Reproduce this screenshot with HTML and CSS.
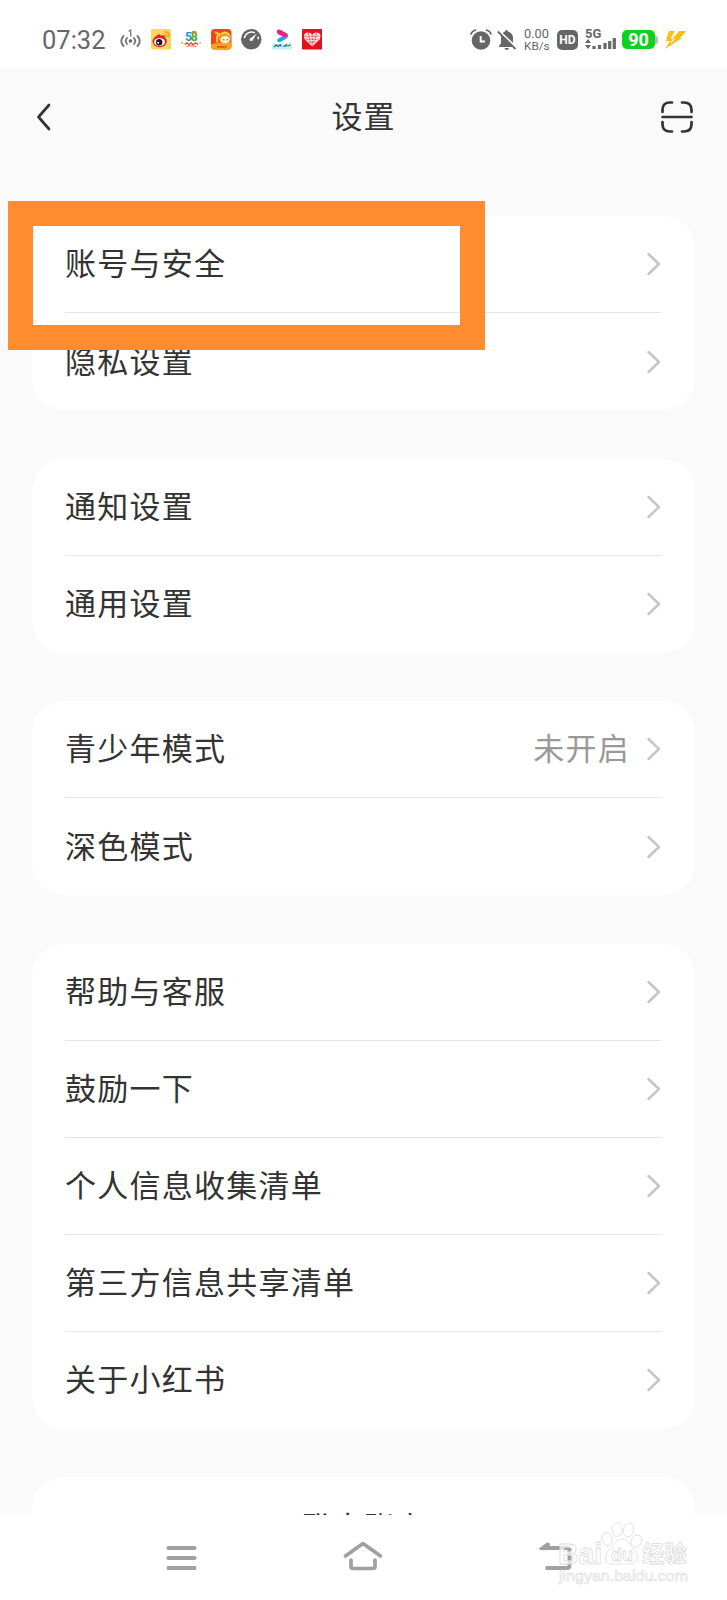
FILE: index.html
```
<!DOCTYPE html>
<html lang="zh-CN">
<head>
  <meta charset="UTF-8">
  <meta name="viewport" content="width=device-width, initial-scale=1.0">
  <title>设置</title>
  <link rel="stylesheet" href="styles.css">
</head>
<body>
  <svg class="symbols">
    <symbol id="chevron" viewBox="0 0 16 24">
      <path d="M2.500 2 L13 12 L2.500 22" fill="none" stroke="#c6c6c6" stroke-width="2.500" stroke-linecap="round" stroke-linejoin="round"/>
    </symbol>
  </svg>

  <div class="screen">
    <div class="status-bar">
      <span class="time">07:32</span>
      <svg class="hotspot" viewBox="0 0 24 22">
        <g fill="none" stroke="#777" stroke-width="1.9" stroke-linecap="round">
          <path d="M4.500 7 Q0 12 4.500 17M18.500 7 Q23 12 18.500 17M8 9 Q5.500 12 8 15M15 9 Q17.500 12 15 15"/>
          <path d="M10 2 L11.700 1 V7" stroke-width="1.300"/>
        </g>
        <circle cx="11.500" cy="12" r="1.800" fill="#666"/>
      </svg>
      <div class="app-icons">
        <!-- weibo -->
        <svg viewBox="0 0 20 20">
          <rect width="20" height="20" rx="2" fill="#fbd75a"/>
          <ellipse cx="8.500" cy="12" rx="7" ry="5.700" fill="#e0202a"/>
          <path d="M4 8 Q8 3 9.500 6.500 Q14 5 13.500 9" fill="#e0202a"/>
          <ellipse cx="8.300" cy="12.700" rx="5.300" ry="3.900" fill="#fff"/>
          <circle cx="8" cy="12.900" r="3.100" fill="#1d1416"/>
          <circle cx="7" cy="13.500" r="1" fill="#fff"/>
          <path d="M12.500 3 Q18 2 17.800 8M13 5.500 Q15.500 5.500 15.300 8" fill="none" stroke="#f4951f" stroke-width="1.300"/>
        </svg>
        <!-- 58 -->
        <svg viewBox="0 0 20 20">
          <text x="4" y="11.500" class="num" fill="#1d9bd8">5</text>
          <text x="9.500" y="11.500" class="num" fill="#51a832">8</text>
          <path d="M11 4.500 Q10.500 2.500 12.700 2.500 Q14.800 2.500 14.500 4.500" fill="none" stroke="#f57c1f" stroke-width="1.500"/>
          <path d="M3.500 15 L6 13.500 L7.500 15.500 L10 13.500 L12 15.500 L14 13.500 L16.500 15" fill="none" stroke="#e2472f" stroke-width="1.300"/>
          <path d="M5 17 Q10 15.500 15 17" fill="none" stroke="#ef6b45" stroke-width="1"/>
          <path d="M0 13 L2 14M20 13 L18 14" stroke="#f3a530" stroke-width="1.300"/>
        </svg>
        <!-- cartoon game -->
        <svg viewBox="0 0 20 20">
          <rect width="20" height="20" rx="3.500" fill="#f4431f"/>
          <path d="M0 15 Q10 12 20 13 V17 Q20 20 16 20 H4 Q0 20 0 17Z" fill="#f9a01f"/>
          <circle cx="13.500" cy="8.500" r="6" fill="#fc9a20"/>
          <path d="M4 3 L8 5 L6 7 V13" fill="none" stroke="#ffd23b" stroke-width="2"/>
          <path d="M10 5 Q14 1.500 18 6" fill="none" stroke="#ffe14a" stroke-width="1.500"/>
          <ellipse cx="13.800" cy="10.500" rx="4.600" ry="3.600" fill="#fff3d3"/>
          <circle cx="12.500" cy="10.500" r=".7" fill="#b5421c"/>
          <circle cx="16" cy="10.500" r=".7" fill="#b5421c"/>
          <path d="M6 17.500 H15" stroke="#b8551a" stroke-width="1.600" stroke-dasharray="2 .6"/>
        </svg>
        <!-- speed gauge -->
        <svg viewBox="0 0 20 20">
          <circle cx="10" cy="10" r="10" fill="#646464"/>
          <path d="M3.300 9 A7 7 0 0 1 13.500 3.800M16.500 7.500 Q17 8.500 16.900 10" fill="none" stroke="#fff" stroke-width="1.400"/>
          <path d="M15.500 4.500 L11 11.500 A1.700 1.700 0 0 1 8.500 9.500Z" fill="#fff"/>
        </svg>
        <!-- video -->
        <svg viewBox="0 0 20 20">
          <path d="M15.700 6 Q16 8 14.500 9 L8.500 12.500 Q5.500 13.500 5 11.500 Q4.800 10 6.500 9 L11.500 6.500Z" fill="#16a9e8"/>
          <path d="M6 .5 Q4.500 1 4.800 3.200 Q5 4.800 7 5.500 L12 8 L15.700 6.500 Q15.500 4.500 13 3.500 L8 .8 Q7 .2 6 .5Z" fill="#f51b8c"/>
          <rect x="0" y="14" width="20" height="6" fill="#c5f0f3"/>
          <path d="M2 17.500 L4 15.500 L6 17 L8 15.300 L9 17M11 17 H12 L14 15.500 L15 17M16 16.500 L18 15.500" fill="none" stroke="#276f82" stroke-width="1.300"/>
        </svg>
        <!-- heart -->
        <svg viewBox="0 0 20 20">
          <rect width="20" height="20" rx="1" fill="#e0131f"/>
          <path d="M10 17 L2.500 10 Q0.500 4 5.500 3.500 Q9 3.500 10 5.500 Q11 3.500 14.500 3.500 Q19.500 4 17.500 10Z" fill="#fbdede"/>
          <path d="M3 7 H17M4 10 L16 10M6 4 L8 13M14 4 L12 13M7 13 H13M10 6 V16" stroke="#e44" stroke-width=".9" stroke-dasharray="1.800 1"/>
        </svg>
      </div>

      <div class="system-icons">
        <svg class="alarm" viewBox="0 0 22 22">
          <circle cx="11" cy="11.500" r="9.300" fill="#666"/>
          <path d="M1 5 Q2 2 5.500 1M21 5 Q20 2 16.500 1" fill="none" stroke="#666" stroke-width="1.700" stroke-linecap="round"/>
          <path d="M10.700 7 V12.500 H15" fill="none" stroke="#fff" stroke-width="2"/>
        </svg>
        <svg class="bell" viewBox="0 0 20 22">
          <path d="M9.500 1 Q11 1 11 2.500 Q16 4 16 9 V14 L18.500 17 V18 H2 V17 L4 14 V9 Q4 4 8 2.500 Q8 1 9.500 1ZM7.500 19 H12 Q11.500 21 9.700 21 Q8 21 7.500 19Z" fill="#666"/>
          <path d="M1.500 1.500 L20 19.500" stroke="#fff" stroke-width="2.400"/>
          <path d="M.8 2.500 L18.500 20" stroke="#666" stroke-width="1.800"/>
        </svg>
        <div class="speed"><span>0.00</span><span>KB/s</span></div>
        <div class="hd">HD</div>
        <div class="network">
          <span>5G</span>
          <svg viewBox="0 0 31 12">
            <path d="M0 5 L3 1 L6 5ZM0 7 L3 11 L6 7Z" fill="#666"/>
            <path d="M9 11 V8M14.500 11 V7M20 11 V5M24.700 11 V3M29.300 11 V0" stroke="#666" stroke-width="3.200"/>
          </svg>
        </div>
        <div class="battery">90</div>
        <svg class="bolt" viewBox="0 0 24 18">
          <path d="M5 0 L11 0 L8 6 L10 6 L15 0 L22.500 0 L16 7 L18 7 L1 18 L6 10 L2 10Z" fill="#f9bd15"/>
          <path d="M11.500 0 L7.500 7 L10 8 L7 12" fill="none" stroke="#fff" stroke-width="1.100"/>
        </svg>
      </div>
    </div>

    <header class="header">
      <svg class="back" viewBox="0 0 18 30">
        <path d="M15 3 L4.500 15 L15 27" fill="none" stroke="#333" stroke-width="2.700" stroke-linecap="round" stroke-linejoin="round"/>
      </svg>
      <h1 class="title">设置</h1>
      <svg class="scan" viewBox="0 0 34 34">
        <path d="M2.500 12 V10 Q2.500 2.500 10 2.500 H12M22 2.500 H24 Q31.500 2.500 31.500 10 V12M31.500 22 V24 Q31.500 31.500 24 31.500 H22M12 31.500 H10 Q2.500 31.500 2.500 24 V22M2.500 17 H31.500" fill="none" stroke="#333" stroke-width="2.700" stroke-linecap="round"/>
      </svg>
    </header>

    <main class="list">
      <section class="card">
        <div class="row"><span>账号与安全</span><svg class="chevron"><use href="#chevron"/></svg></div>
        <div class="row"><span>隐私设置</span><svg class="chevron"><use href="#chevron"/></svg></div>
        <div class="highlight"></div>
      </section>

      <section class="card">
        <div class="row"><span>通知设置</span><svg class="chevron"><use href="#chevron"/></svg></div>
        <div class="row"><span>通用设置</span><svg class="chevron"><use href="#chevron"/></svg></div>
      </section>

      <section class="card">
        <div class="row"><span>青少年模式</span><span class="value">未开启</span><svg class="chevron"><use href="#chevron"/></svg></div>
        <div class="row"><span>深色模式</span><svg class="chevron"><use href="#chevron"/></svg></div>
      </section>

      <section class="card">
        <div class="row"><span>帮助与客服</span><svg class="chevron"><use href="#chevron"/></svg></div>
        <div class="row"><span>鼓励一下</span><svg class="chevron"><use href="#chevron"/></svg></div>
        <div class="row"><span>个人信息收集清单</span><svg class="chevron"><use href="#chevron"/></svg></div>
        <div class="row"><span>第三方信息共享清单</span><svg class="chevron"><use href="#chevron"/></svg></div>
        <div class="row"><span>关于小红书</span><svg class="chevron"><use href="#chevron"/></svg></div>
      </section>

      <section class="card">
        <div class="row logout"><span>登出账户</span></div>
      </section>
    </main>

    <nav class="nav-bar">
      <svg viewBox="0 0 40 32">
        <path d="M6.500 6 H32.500M6.500 16 H32.500M6.500 26 H32.500" stroke="#a0a0a0" stroke-width="4.200" stroke-linecap="round"/>
      </svg>
      <svg viewBox="0 0 40 32">
        <path d="M2.500 14 L20 1.500 L37.500 14M8 18 V24.500 Q8 26.500 10.500 26.500 H29.500 Q32 26.500 32 24.500 V18" fill="none" stroke="#a0a0a0" stroke-width="3.700" stroke-linecap="round" stroke-linejoin="round"/>
      </svg>
      <svg viewBox="0 0 40 32">
        <path d="M11 6 H31 Q33.500 6 33.500 8.500 V23.500 Q33.500 26 31 26 H11" fill="none" stroke="#a0a0a0" stroke-width="3.900" stroke-linecap="round"/>
        <path d="M3 6.500 L11 .5 Q14 0 14 2.500 V8 H4Z" fill="#a0a0a0"/>
      </svg>
    </nav>

    <div class="watermark">
      <svg viewBox="0 0 132 66">
        <g class="wm-text">
          <text x="0" y="42.500" class="wm-brand" textLength="44" lengthAdjust="spacingAndGlyphs">Bai</text>
          <g>
            <ellipse cx="49" cy="18" rx="5" ry="6.500" transform="rotate(-15 49 18)"/>
            <ellipse cx="59" cy="8.500" rx="5" ry="7"/>
            <ellipse cx="70.500" cy="9" rx="5" ry="7" transform="rotate(10 70.500 9)"/>
            <ellipse cx="78.500" cy="20" rx="5" ry="6.200" transform="rotate(25 78.500 20)"/>
            <path d="M64 18 Q70 18 73 25 Q80 31 80 36 Q80 43 71 43 H55 Q47 43 47 36 Q48 31 55 25 Q58 18 64 18Z"/>
          </g>
          <text x="53" y="40" class="wm-du">du</text>
          <text x="84" y="40.500" class="wm-cn">经验</text>
          <text x="1" y="59.500" class="wm-url" textLength="129" lengthAdjust="spacingAndGlyphs">jingyan.baidu.com</text>
        </g>
      </svg>
    </div>
  </div>
</body>
</html>
```
FILE: styles.css
```
:root {
  --color-bg: #fafafa;
  --color-card: #fff;
  --color-text: #333;
  --color-text-secondary: #999;
  --color-status: #666;
  --color-border: #e5e5e5;
  --color-highlight: #ff8d30;
}

* {
  margin: 0;
  padding: 0;
  box-sizing: border-box;
}

body {
  background: var(--color-bg);
  color: var(--color-text);
  font-family: "Noto Sans CJK SC", sans-serif;
}

svg {
  display: block;
  flex-shrink: 0;
}

.symbols {
  display: none;
}

.screen {
  position: relative;
  display: flex;
  flex-direction: column;
  width: 727px;
  height: 1600px;
  overflow: hidden;
}

/* Status bar */
.status-bar {
  display: flex;
  align-items: center;
  height: 68px;
  padding: 11px 39px 0 42px;
  background: #fff;
  color: var(--color-status);
  font-family: Roboto, sans-serif;
}

.time {
  width: 77px;
  font-size: 25.5px;
  line-height: 30px;
  padding-top: 1.5px;
}

.hotspot {
  width: 24px;
  height: 22px;
  margin-right: 7.5px;
}

.app-icons {
  display: flex;
  gap: 9.8px;
}

.app-icons svg {
  width: 20.5px;
  height: 20.5px;
}

.num {
  font: 700 12px Roboto, sans-serif;
}

.system-icons {
  display: flex;
  align-items: center;
  margin-left: auto;
}

.alarm {
  width: 22px;
  height: 22px;
  margin-right: 5px;
}

.bell {
  width: 20px;
  height: 22px;
  margin-right: 7px;
}

.speed {
  display: flex;
  flex-direction: column;
  width: 26px;
  margin-right: 7px;
  font-size: 11.8px;
  line-height: 12px;
  white-space: nowrap;
}

.speed span:first-child {
  font-size: 12.8px;
}

.hd {
  width: 21px;
  height: 20px;
  margin-right: 7px;
  border-radius: 5px;
  background: var(--color-status);
  color: #fff;
  font-size: 12px;
  font-weight: 700;
  line-height: 20px;
  text-align: center;
}

.network {
  width: 31px;
  height: 21px;
  margin-right: 6px;
  font-size: 13px;
  font-weight: 700;
  line-height: 10px;
}

.network span {
  display: block;
  height: 9px;
}

.network svg {
  width: 31px;
  height: 12px;
}

.battery {
  position: relative;
  width: 33px;
  height: 19px;
  margin-right: 9px;
  border-radius: 5px;
  background: #0fd11f;
  color: #fff;
  font-size: 18px;
  font-weight: 700;
  line-height: 20px;
  text-align: center;
}

.battery::after {
  content: "";
  position: absolute;
  top: 6px;
  right: -3px;
  width: 3px;
  height: 8px;
  border-radius: 0 2px 2px 0;
  background: #bbb;
}

.bolt {
  width: 24px;
  height: 18px;
}

/* Header */
.header {
  display: flex;
  align-items: center;
  justify-content: space-between;
  height: 98px;
  padding: 0 33.5px 0 33.5px;
}

.back {
  width: 18px;
  height: 30px;
  margin-right: 16px;
}

.title {
  padding-bottom: 6px;
  font-size: 31px;
  font-weight: 400;
  letter-spacing: 1px;
}

.scan {
  width: 34px;
  height: 34px;
}

/* Settings list */
.list {
  display: flex;
  flex: 1;
  flex-direction: column;
  gap: 48.5px;
  min-height: 0;
  padding: 50px 32px 0;
  overflow: hidden;
}

.card {
  position: relative;
  flex-shrink: 0;
  padding: 0 33px 0 32.5px;
  border-radius: 32px;
  background: var(--color-card);
}

.row {
  display: flex;
  align-items: center;
  height: 97px;
  border-bottom: 1px solid var(--color-border);
  font-size: 31px;
  letter-spacing: 1.250px;
}

.row span {
  padding: 0 0 5px 0.500px;
}

.row:last-child,
.row:has(+ .highlight) {
  border-bottom: none;
}

.row .value {
  margin-left: auto;
  color: var(--color-text-secondary);
}

.chevron {
  width: 16px;
  height: 24px;
  margin-left: auto;
}

.value + .chevron {
  margin-left: 16px;
}

.logout {
  justify-content: center;
  letter-spacing: .3px;
}

.logout span {
  padding-bottom: 1px;
}

/* Marker drawn over the first row */
.highlight {
  position: absolute;
  top: -15px;
  left: -24.5px;
  width: 477.5px;
  height: 149px;
  border: 25px solid var(--color-highlight);
}

/* Bottom navigation */
.nav-bar {
  display: flex;
  justify-content: space-between;
  height: 85.5px;
  padding: 27px 151px 0 162px;
  background: #fff;
}

.nav-bar svg {
  width: 40px;
  height: 32px;
}

.nav-bar svg:nth-child(2) {
  margin-right: 11.5px;
}

.watermark {
  position: absolute;
  left: 558px;
  top: 1521px;
}

.watermark svg {
  width: 132px;
  height: 66px;
}

.wm-text {
  fill: rgba(255, 255, 255, .7);
  stroke: #dcdcdc;
  stroke-width: .8px;
  font-family: "Liberation Sans", "Noto Sans CJK SC", sans-serif;
}

.wm-brand {
  font-size: 30px;
  font-weight: 700;
}

.wm-du {
  font-size: 18px;
  font-weight: 700;
}

.wm-cn {
  font-size: 22.5px;
  font-weight: 700;
}

.wm-url {
  font-size: 15px;
  stroke-width: .6px;
}
```
